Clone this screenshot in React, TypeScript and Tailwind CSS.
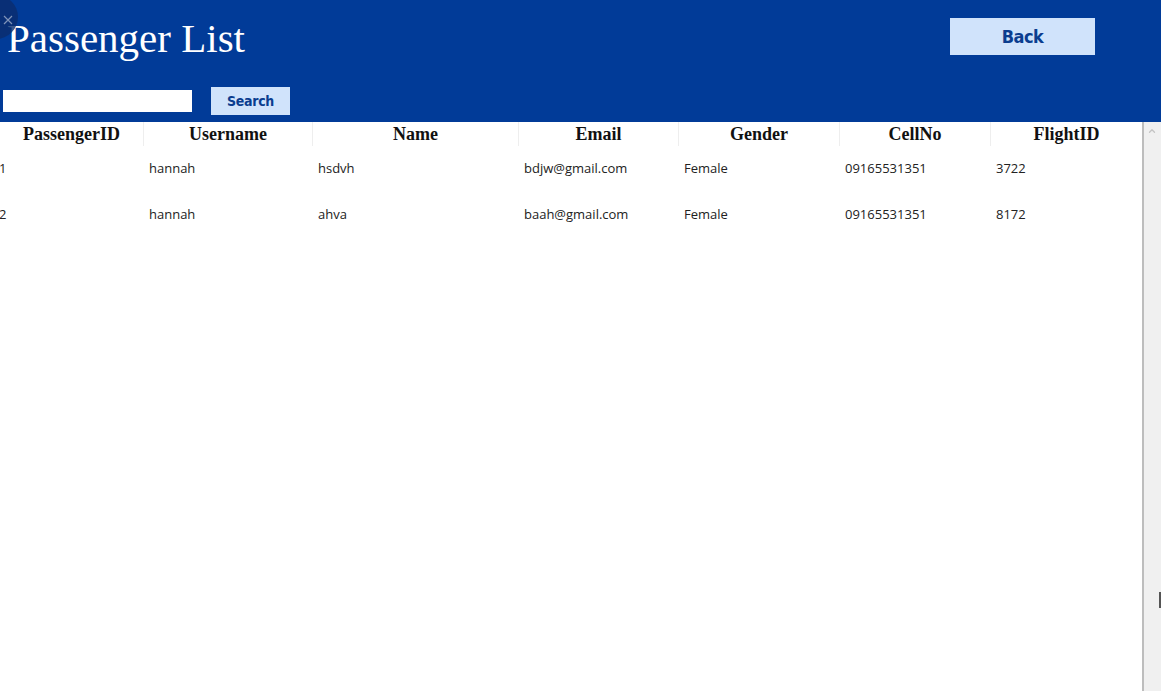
import { ChevronUp } from 'lucide-react';

const columns = [
  { label: 'PassengerID', width: 'w-[144px]' },
  { label: 'Username', width: 'w-[169px]' },
  { label: 'Name', width: 'w-[206px]' },
  { label: 'Email', width: 'w-[160px]' },
  { label: 'Gender', width: 'w-[161px]' },
  { label: 'CellNo', width: 'w-[151px]' },
  { label: 'FlightID', width: 'w-[151px]' },
];

const passengers = [
  ['1', 'hannah', 'hsdvh', 'bdjw@gmail.com', 'Female', '09165531351', '3722'],
  ['2', 'hannah', 'ahva', 'baah@gmail.com', 'Female', '09165531351', '8172'],
];

export default function App() {
  return (
    <div className="relative h-[691px] w-[1161px] overflow-hidden bg-white">
      {/* close knob peeking in the corner */}
      <div className="absolute -left-[26px] -top-[5px] h-[44px] w-[44px] rounded-full bg-[#0b2d6e]/80">
        <svg width="10" height="10" viewBox="0 0 10 10" className="absolute left-[29px] top-[20px]">
          <path d="M1 1 L9 9 M9 1 L1 9" stroke="#7f93b8" strokeWidth="1.2" />
        </svg>
      </div>

      <header className="flex h-[122px] flex-col bg-[#013b98]">
        <div className="flex items-start justify-between">
          <h1 className="ml-[7px] mt-[13px] font-['Liberation_Serif',serif] text-[41px] leading-[50px] text-white">
            Passenger List
          </h1>
          <button className="mr-[66px] mt-[18px] h-[37px] w-[145px] bg-[#d0e3fb] font-['DejaVu_Sans_Condensed','DejaVu_Sans',sans-serif] text-[18px] font-bold tracking-[-0.5px] text-[#0a3d8f]">
            Back
          </button>
        </div>
        <div className="mt-[24px] flex items-center gap-[19px] pl-[3px]">
          <input className="h-[22px] w-[189px] bg-white px-1 text-[13px] outline-none" />
          <button className="h-[28px] w-[79px] bg-[#d0e3fb] font-['DejaVu_Sans_Condensed','DejaVu_Sans',sans-serif] text-[14px] font-bold tracking-[-0.3px] text-[#0a3d8f]">
            Search
          </button>
        </div>
      </header>

      <div className="flex h-[569px]">
        <div className="w-[1142px]">
          <div className="flex h-[24px]">
            {columns.map((col, i) => (
              <div
                key={col.label}
                className={`${col.width} flex items-center justify-center font-['Liberation_Serif',serif] text-[18px] font-bold text-[#111] ${i < columns.length - 1 ? 'border-r border-[#eeeeee]' : ''}`}
              >
                {col.label}
              </div>
            ))}
          </div>
          {passengers.map((row) => (
            <div key={row[0]} className="flex h-[46px] items-center pt-[0px]">
              {row.map((cell, i) => (
                <div
                  key={i}
                  className={`${columns[i].width} ${i === 0 ? '-ml-[1px] pl-0' : 'pl-[6px]'} font-['Open_Sans',sans-serif] text-[13px] text-[#222]`}
                >
                  {cell}
                </div>
              ))}
            </div>
          ))}
        </div>

        <div className="relative w-[19px] border-l-2 border-[#bdbdbd] bg-[#f0f0f0]">
          <ChevronUp size={10} strokeWidth={3} className="ml-[3px] mt-[4px] text-[#c4c4c4]" />
          <div className="absolute right-0 top-[470px] h-[16px] w-[2px] bg-[#555]" />
        </div>
      </div>
    </div>
  );
}
